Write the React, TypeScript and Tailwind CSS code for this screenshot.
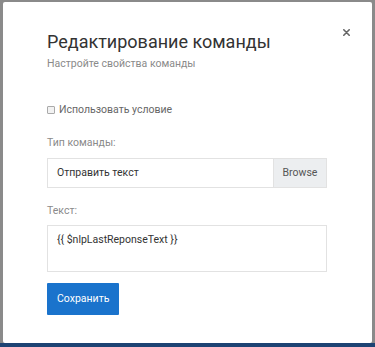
import { useState } from 'react'

export default function App() {
  const [useCondition, setUseCondition] = useState(false)

  return (
    <div className="w-[375px] h-[347px] bg-[#8a8a8a] flex flex-col overflow-hidden font-['Roboto',sans-serif]">
      <div className="flex-1 px-[3px] pt-[2px]">
        {/* Modal */}
        <div className="relative h-[341px] bg-white rounded-[2px] pl-[44px] pr-[45px] pt-[29px]">
          <button className="absolute right-[21px] top-[25px] w-[10px] h-[10px] flex items-center justify-center text-[#666]">
            <svg width="7" height="7" viewBox="0 0 7 7">
              <path d="M0.8 0.8 L6.2 6.2 M6.2 0.8 L0.8 6.2" stroke="currentColor" strokeWidth="1.6" strokeLinecap="round" />
            </svg>
          </button>

          <h2 className="text-[18px] leading-[22px] text-[#333]">Редактирование команды</h2>
          <p className="mt-[3.5px] text-[10.5px] leading-[14px] text-[#8a8a8a]">Настройте свойства команды</p>

          <label className="mt-[32px] flex items-center gap-[4px] text-[10.5px] leading-[14px] text-[#666]">
            <input
              type="checkbox"
              checked={useCondition}
              onChange={() => setUseCondition(!useCondition)}
              className="appearance-none w-[8px] h-[8px] border border-[#aaa] rounded-[1px] bg-[#f2f2f2]"
            />
            Использовать условие
          </label>

          <div className="mt-[19px] text-[10.5px] leading-[14px] text-[#8a8a8a]">Тип команды:</div>
          <div className="mt-[8px] flex h-[30px] border border-[#e2e2e2]">
            <div className="flex-1 flex items-center pl-[9px] text-[10.5px] leading-[14px] text-[#333]">Отправить текст</div>
            <div className="w-[53px] flex items-center justify-center bg-[#eceef0] border-l border-[#e2e2e2] text-[10.5px] leading-[14px] text-[#555]">
              Browse
            </div>
          </div>

          <div className="mt-[16px] text-[10.5px] leading-[14px] text-[#8a8a8a]">Текст:</div>
          <div className="mt-[7px] h-[47px] border border-[#e2e2e2] pl-[9px] pt-[7px] text-[10.5px] leading-[14px] text-[#333]">
            {'{{ $nlpLastReponseText }}'}
          </div>

          <button className="mt-[11px] h-[32px] px-[10px] bg-[#1a73cc] text-white text-[10.5px] leading-[14px] rounded-[1px]">
            Сохранить
          </button>
        </div>
      </div>
      <div className="h-[4px] bg-[#1d4373]" />
    </div>
  )
}
